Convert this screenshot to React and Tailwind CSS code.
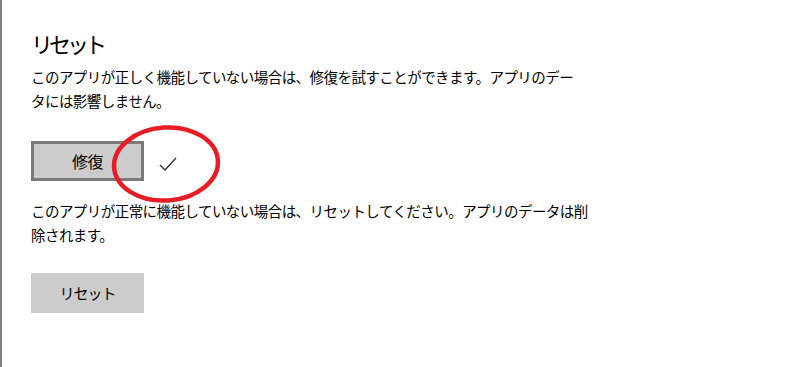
import React from 'react';

const jp = { fontFamily: '"Noto Sans CJK JP", "Noto Sans", sans-serif' };

function Check() {
  return (
    <svg width="22" height="18" viewBox="0 0 22 18" className="absolute left-[155px] top-[155px]">
      <path d="M3 10 L8 15 L19 3" fill="none" stroke="#333" strokeWidth="1.3" />
    </svg>
  );
}

function RedCircle() {
  return (
    <svg width="120" height="90" viewBox="0 0 120 90" className="absolute left-[105px] top-[122px] pointer-events-none">
      <ellipse cx="59" cy="42" rx="52" ry="36.5" fill="none" stroke="#e81c24" strokeWidth="4.5" transform="rotate(-4 59 42)" />
    </svg>
  );
}

export default function App() {
  return (
    <div className="relative w-[790px] h-[367px] bg-white border-l-2 border-[#7f7f7f] text-black overflow-hidden" style={jp}>
      <div className="pl-[29px] pt-[28px]">
        <h1 className="text-[22px] leading-[30px] tracking-[-4px]">リセット</h1>
        <p className="mt-[7px] text-[14.5px] leading-[24px] tracking-[-0.55px] whitespace-nowrap">
          このアプリが正しく機能していない場合は、修復を試すことができます。アプリのデー
          <br />
          タには影響しません。
        </p>
        <div className="mt-[28px] flex items-center">
          <button className="w-[113px] h-[40px] bg-[#cccccc] border-[3px] border-[#7a7a7a] text-[16px] tracking-[-0.5px]">
            修復
          </button>
        </div>
        <p className="mt-[18px] text-[14.5px] leading-[24px] tracking-[-0.55px] whitespace-nowrap">
          このアプリが正常に機能していない場合は、リセットしてください。アプリのデータは削
          <br />
          除されます。
        </p>
        <button className="mt-[26px] w-[113px] h-[40px] bg-[#cccccc] text-[15px] tracking-[-1px]">
          リセット
        </button>
      </div>
      <Check />
      <RedCircle />
    </div>
  );
}
